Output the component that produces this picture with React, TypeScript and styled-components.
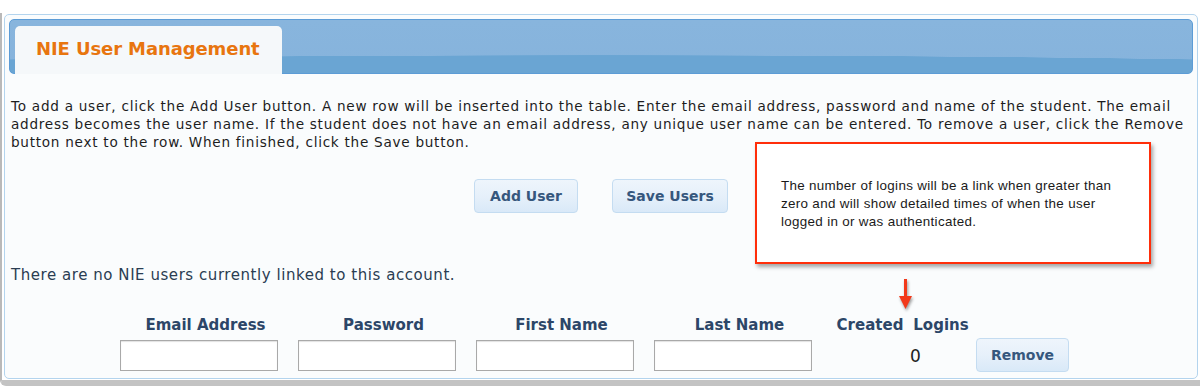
import React from "react";
import styled, { createGlobalStyle } from "styled-components";

const GlobalStyle = createGlobalStyle`
  html, body {
    margin: 0;
    padding: 0;
    background: #ffffff;
    font-family: "DejaVu Sans", Verdana, sans-serif;
  }
`;

const Screen = styled.div`
  width: 1200px;
  height: 386px;
  padding-top: 13px;
  box-sizing: border-box;
  overflow: hidden;
`;

const Frame = styled.div`
  height: 373px;
  box-sizing: border-box;
  border-left: 2px solid #b9b9b9;
  border-bottom: 6px solid #c3c3c3;
  border-bottom-left-radius: 6px;
  padding: 1px 2px 1px 2px;
`;

const Panel = styled.div`
  position: relative;
  height: 100%;
  box-sizing: border-box;
  border: 1px solid #b3d4ee;
  border-radius: 5px;
  background: #fafcfd;
  padding: 4px 4px 0 4px;
`;

const HeaderBar = styled.div`
  height: 55px;
  box-sizing: border-box;
  border: 1px solid #5c9cd6;
  border-radius: 5px;
  background:
    radial-gradient(ellipse 140% 60% at 50% 100%, #6aa5d3 55%, transparent 56%),
    linear-gradient(#88b5dd, #86b3dc);
  display: flex;
  align-items: flex-end;
  padding-left: 5px;
`;

const Tab = styled.div`
  width: 267px;
  height: 48px;
  margin-bottom: -1px;
  box-sizing: border-box;
  background: #f5f8fa;
  border-radius: 5px 5px 0 0;
  padding: 12px 0 0 21px;
  color: #e8750f;
  font-weight: bold;
  font-size: 18px;
  letter-spacing: -0.1px;
`;

const Intro = styled.p`
  margin: 23px 0 0 2px;
  font-size: 13.6px;
  line-height: 18px;
  letter-spacing: 0.73px;
  color: #1d1d1d;
  white-space: nowrap;
`;

const ButtonRow = styled.div`
  display: flex;
  justify-content: center;
  gap: 34px;
  margin-top: 28px;
`;

const SoftButton = styled.button<{ $w: number }>`
  width: ${(p) => p.$w}px;
  height: 34px;
  border: 1px solid #c4dcf1;
  border-radius: 4px;
  background: linear-gradient(#eef5fc 0%, #e6f0fa 50%, #d9e9f8 100%);
  color: #36577d;
  font-family: "DejaVu Sans", Verdana, sans-serif;
  font-weight: bold;
  font-size: 14px;
  padding: 0;
`;

const Message = styled.p`
  margin: 53px 0 0 2px;
  font-size: 15px;
  line-height: 19px;
  letter-spacing: 0.55px;
  color: #2a3d52;
`;

const UserTable = styled.div`
  display: grid;
  grid-template-columns: repeat(4, 178px) 76px 66px 100px;
  margin: 31px 0 0 111px;
  align-items: center;
`;

const HeadCell = styled.div<{ $shift?: number }>`
  font-weight: bold;
  font-size: 15px;
  color: #2c4668;
  text-align: center;
  padding-right: ${(p) => p.$shift ?? 0}px;
  height: 22px;
  white-space: nowrap;
`;

const FieldCell = styled.div`
  padding-top: 1px;
`;

const Field = styled.input`
  width: 158px;
  height: 31px;
  box-sizing: border-box;
  border: 1px solid #a9a9a9;
  box-shadow: inset 0 1px 1px rgba(0, 0, 0, 0.12);
  background: #fff;
`;

const Count = styled.div`
  padding: 1px 0 0 2px;
  font-size: 17px;
  color: #222;
`;

const RemoveCell = styled.div`
  padding-left: 2px;
`;

const Callout = styled.div`
  position: absolute;
  left: 750px;
  top: 127px;
  width: 396px;
  height: 122px;
  box-sizing: border-box;
  border: 2px solid #ff2e0a;
  background: #fff;
  box-shadow: 2px 3px 4px rgba(0, 0, 0, 0.35);
  padding: 33px 10px 0 24px;
  font-family: "Liberation Sans", Arial, sans-serif;
  font-size: 13.4px;
  line-height: 18px;
  letter-spacing: 0.32px;
  color: #1a1a1a;
  white-space: nowrap;
`;

const Pointer = styled.svg`
  position: absolute;
  left: 891px;
  top: 264px;
  filter: drop-shadow(1px 2px 1.5px rgba(0, 0, 0, 0.4));
`;

const columns = ["Email Address", "Password", "First Name", "Last Name"];

function App() {
  return (
    <>
      <GlobalStyle />
      <Screen>
        <Frame>
          <Panel>
            <HeaderBar>
              <Tab>NIE User Management</Tab>
            </HeaderBar>
            <Intro>
              To add a user, click the Add User button. A new row will be inserted into the table. Enter
              the email address, password and name of the student. The email
              <br />
              address becomes the user name. If the student does not have an email address, any unique
              user name can be entered. To remove a user, click the Remove
              <br />
              button next to the row. When finished, click the Save button.
            </Intro>
            <ButtonRow>
              <SoftButton $w={104}>Add User</SoftButton>
              <SoftButton $w={116}>Save Users</SoftButton>
            </ButtonRow>
            <Message>There are no NIE users currently linked to this account.</Message>
            <UserTable>
              {columns.map((c) => (
                <HeadCell key={c} $shift={7}>
                  {c}
                </HeadCell>
              ))}
              <HeadCell>Created</HeadCell>
              <HeadCell>Logins</HeadCell>
              <div />
              {columns.map((c) => (
                <FieldCell key={c}>
                  <Field type="text" />
                </FieldCell>
              ))}
              <div />
              <Count>0</Count>
              <RemoveCell>
                <SoftButton $w={93}>Remove</SoftButton>
              </RemoveCell>
            </UserTable>
            <Callout>
              The number of logins will be a link when greater than
              <br />
              zero and will show detailed times of when the user
              <br />
              logged in or was authenticated.
            </Callout>
            <Pointer width="20" height="32" viewBox="0 0 20 32">
              <rect x="8" y="0" width="3" height="19" fill="#f2391a" />
              <polygon points="3,17 16,17 9.5,30" fill="#f2391a" />
            </Pointer>
          </Panel>
        </Frame>
      </Screen>
    </>
  );
}

export default App;
